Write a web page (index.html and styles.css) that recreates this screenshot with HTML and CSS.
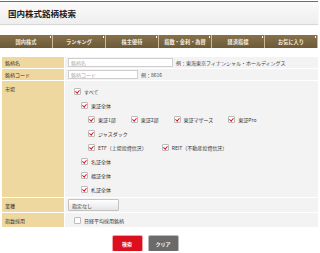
FILE: index.html
```html
<!DOCTYPE html>
<html lang="ja">
  <head>
    <meta charset="UTF-8" />
    <meta name="viewport" content="width=device-width, initial-scale=1.0" />
    <title>国内株式銘柄検索</title>
    <link rel="stylesheet" href="styles.css">
  </head>
  <body>
    <div class="page-title">国内株式銘柄検索</div>

    <ul class="nav">
      <li>国内株式</li>
      <li>ランキング</li>
      <li>株主優待</li>
      <li>指数・金利・為替</li>
      <li>経済指標</li>
      <li>お気に入り</li>
    </ul>

    <div class="search-form">
      <div class="label">銘柄名</div>
      <div class="value">
        <span class="text-input wide">銘柄名</span>
        <span class="hint">例：東海東京フィナンシャル・ホールディングス</span>
      </div>

      <div class="label">銘柄コード</div>
      <div class="value">
        <span class="text-input narrow">銘柄コード</span>
        <span class="hint">例：8616</span>
      </div>

      <div class="label label-top">市場</div>
      <div class="value markets">
        <div class="line"><span class="check on"></span>すべて</div>
        <div class="line lv1"><span class="check on"></span>東証全体</div>
        <div class="line lv2">
          <span class="opt"><span class="check on"></span>東証1部</span>
          <span class="opt"><span class="check on"></span>東証2部</span>
          <span class="opt"><span class="check on"></span>東証マザーズ</span>
          <span class="opt"><span class="check on"></span>東証Pro</span>
        </div>
        <div class="line lv2"><span class="check on"></span>ジャスダック</div>
        <div class="line lv2">
          <span class="opt"><span class="check on"></span>ETF（上場投資信託）</span>
          <span class="opt"><span class="check on"></span>REIT（不動産投資信託）</span>
        </div>
        <div class="line lv1"><span class="check on"></span>名証全体</div>
        <div class="line lv1"><span class="check on"></span>福証全体</div>
        <div class="line lv1"><span class="check on"></span>札証全体</div>
      </div>

      <div class="label">業種</div>
      <div class="value">
        <span class="select">指定なし</span>
      </div>

      <div class="label">指数採用</div>
      <div class="value tall">
        <span class="line plain"><span class="check"></span>日経平均採用銘柄</span>
      </div>
    </div>

    <div class="actions">
      <span class="btn btn-search">検索</span>
      <span class="btn btn-clear">クリア</span>
    </div>
  </body>
</html>
```

FILE: styles.css
```css
body {
  margin: 0;
  width: 320px;
  font-family: "Noto Sans CJK JP", "Noto Sans", sans-serif;
  font-size: 5px;
  color: #333;
  background: #fff;
}

.page-title {
  margin: 1px 2px 0 0;
  height: 22px;
  border-top: 1px solid #8a6a3c;
  padding-left: 8px;
  display: flex;
  align-items: center;
  font-size: 8.5px;
  font-weight: bold;
  color: #222;
  background: linear-gradient(#fbfbfb, #eeeeee);
  box-shadow: 0 1px 1px #d8d8d8;
}

.nav {
  list-style: none;
  margin: 11px 2px 0 0;
  padding: 0;
  height: 13px;
  display: grid;
  grid-template-columns: repeat(6, 1fr);
  background: linear-gradient(#86714a, #6d5a37);
}

.nav li {
  position: relative;
  display: flex;
  align-items: center;
  justify-content: center;
  color: #f4eee0;
  font-size: 5.2px;
  font-weight: bold;
  border-right: 1px solid #c8b791;
}

.nav li::after {
  content: "";
  position: absolute;
  top: 1px;
  right: 1px;
  width: 1px;
  height: 2px;
  background: #fff;
}

.search-form {
  margin: 9px 2px 0 2px;
  display: grid;
  grid-template-columns: 62px 1fr;
  gap: 1px;
}

.label {
  background: #efd8a0;
  padding-left: 3px;
  display: flex;
  align-items: center;
  min-height: 11px;
}

.label-top {
  align-items: flex-start;
  padding-top: 4px;
}

.value {
  background: #f3f3f3;
  display: flex;
  align-items: center;
  gap: 3px;
  padding-left: 3px;
  min-height: 11px;
}

.value.tall {
  min-height: 14px;
}

.text-input {
  height: 7px;
  border: 1px solid #cfcfcf;
  background: #fff;
  color: #aaa;
  padding-left: 2px;
  display: flex;
  align-items: center;
}

.wide {
  width: 101px;
}

.narrow {
  width: 66px;
}

.hint {
  color: #444;
}

.markets {
  display: block;
  padding: 3px 0 1px 9px;
  min-height: 0;
}

.line {
  height: 14px;
  display: flex;
  align-items: center;
}

.lv1 {
  padding-left: 7px;
}

.lv2 {
  padding-left: 14px;
}

.opt {
  display: flex;
  align-items: center;
  margin-right: 15px;
}

.check {
  position: relative;
  width: 5px;
  height: 5px;
  border: 1px solid #bbb;
  border-radius: 1px;
  background: #fff;
  margin-right: 3px;
  flex: none;
}

.check.on::after {
  content: "";
  position: absolute;
  left: 1px;
  top: 0;
  width: 1.5px;
  height: 3px;
  border: solid #e0101e;
  border-width: 0 1.5px 1.5px 0;
  transform: rotate(40deg);
}

.plain {
  padding-left: 6px;
}

.select {
  margin: 1px 0;
  width: 46px;
  height: 10px;
  border: 1px solid #c4c4c4;
  border-radius: 1px;
  padding-left: 3px;
  display: flex;
  align-items: center;
  color: #333;
  background: linear-gradient(#ffffff, #e6e6e6);
}

.actions {
  margin-top: 9px;
  padding-right: 30px;
  display: flex;
  justify-content: center;
  gap: 7px;
}

.btn {
  width: 29px;
  height: 15px;
  border-radius: 1px;
  display: flex;
  align-items: center;
  justify-content: center;
  color: #fff;
  font-weight: bold;
}

.btn-search {
  background: #dc0f1e;
  box-shadow: 0 0 0 1px #f4a0a6;
}

.btn-clear {
  background: #6a6a6a;
  box-shadow: 0 0 0 1px #bbb;
}
```
